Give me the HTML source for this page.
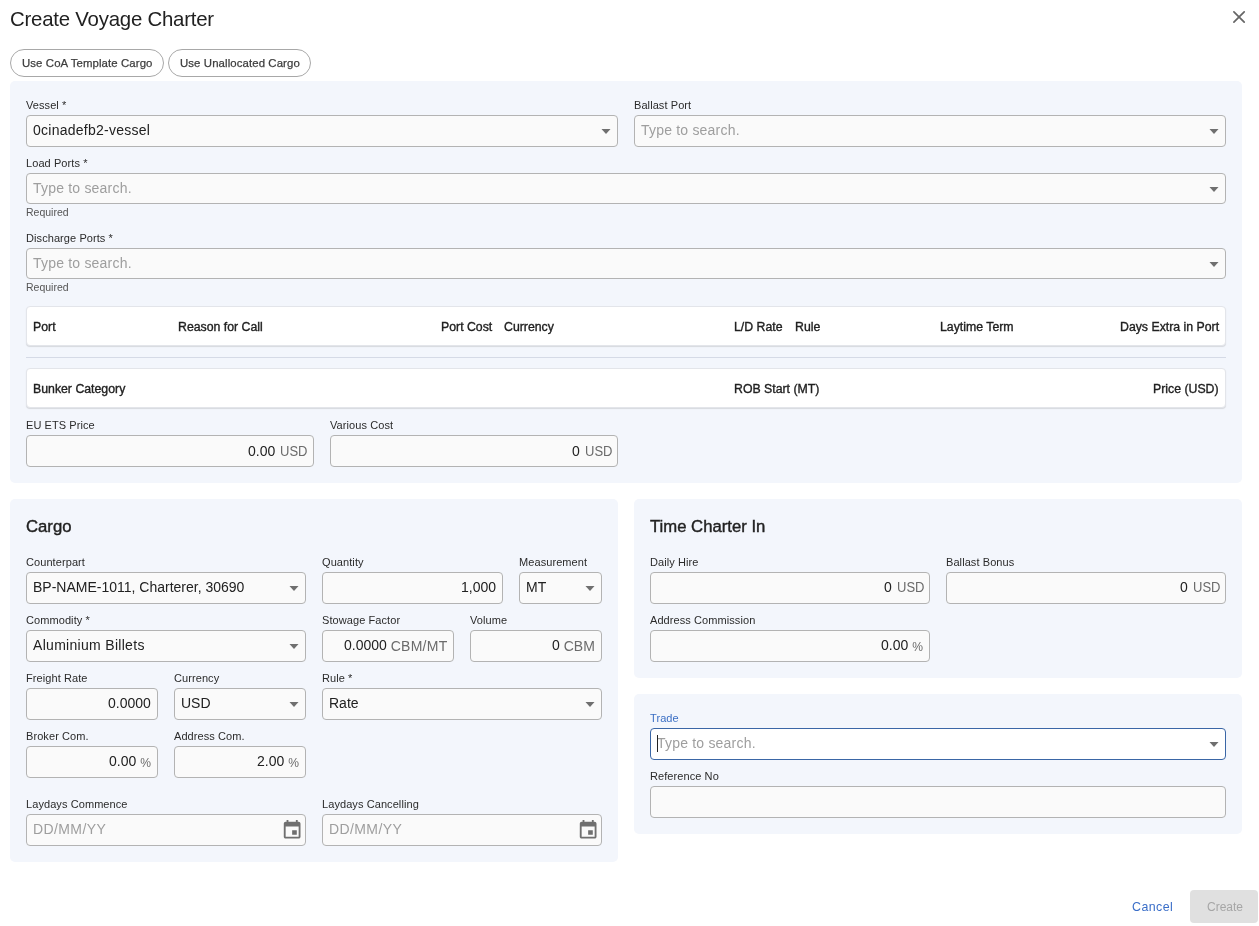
<!DOCTYPE html>
<html><head><meta charset="utf-8"><style>
html,body{margin:0;padding:0;background:#fff;width:1259px;height:926px;overflow:hidden;position:relative;font-family:"Liberation Sans",sans-serif;}
.t{position:absolute;white-space:nowrap;will-change:transform;}
.b{position:absolute;box-sizing:border-box;}
</style></head><body>
<div class="t" style="left:10px;top:8.63px;font-size:20.4px;line-height:20.4px;color:#212121;font-weight:400;letter-spacing:-0.22px;">Create Voyage Charter</div>
<svg class="b" style="left:1226px;top:4px" width="26" height="26" viewBox="1226 4 26 26"><path d="M1233.9 11.9L1244.2 22.2M1244.2 11.9L1233.9 22.2" stroke="#666" stroke-width="1.7" stroke-linecap="round" fill="none"/></svg>
<div class="b" style="left:10px;top:49px;width:154px;height:28px;border:1px solid #a8a8a8;border-radius:14px;"></div>
<div class="b" style="left:168px;top:49px;width:143px;height:28px;border:1px solid #a8a8a8;border-radius:14px;"></div>
<div class="t" style="left:22.3px;top:57.55px;font-size:11.4px;line-height:11.4px;color:#3d3d3d;font-weight:400;-webkit-text-stroke:0.25px #3d3d3d;letter-spacing:0.1px;">Use CoA Template Cargo</div>
<div class="t" style="left:180.3px;top:57.55px;font-size:11.4px;line-height:11.4px;color:#3d3d3d;font-weight:400;-webkit-text-stroke:0.25px #3d3d3d;letter-spacing:0.1px;">Use Unallocated Cargo</div>
<div class="b" style="left:10px;top:81px;width:1232px;height:402px;background:#f3f6fc;border-radius:5px;"></div>
<div class="t" style="left:26px;top:99.69px;font-size:11px;line-height:11px;color:#2b2b2b;font-weight:400;letter-spacing:0.08px;">Vessel *</div>
<div class="b" style="left:26px;top:115px;width:592px;height:32px;background:#fafafa;border:1px solid #b3b3b3;border-radius:4px;"></div>
<div class="t" style="left:33px;top:122.65px;font-size:14px;line-height:14px;color:#212121;font-weight:400;letter-spacing:0.25px;">0cinadefb2-vessel</div>
<svg class="b" style="left:601px;top:129px" width="10" height="5" viewBox="0 0 10 5"><path d="M0.5 0L5 4.9L9.5 0Z" fill="#6f6f6f"/></svg>
<div class="t" style="left:634px;top:99.69px;font-size:11px;line-height:11px;color:#2b2b2b;font-weight:400;letter-spacing:0.08px;">Ballast Port</div>
<div class="b" style="left:634px;top:115px;width:592px;height:32px;background:#fafafa;border:1px solid #b3b3b3;border-radius:4px;"></div>
<div class="t" style="left:641px;top:122.65px;font-size:14px;line-height:14px;color:#9e9e9e;font-weight:400;letter-spacing:0.2px;">Type to search.</div>
<svg class="b" style="left:1209px;top:129px" width="10" height="5" viewBox="0 0 10 5"><path d="M0.5 0L5 4.9L9.5 0Z" fill="#6f6f6f"/></svg>
<div class="t" style="left:26px;top:157.69px;font-size:11px;line-height:11px;color:#2b2b2b;font-weight:400;letter-spacing:0.08px;">Load Ports *</div>
<div class="b" style="left:26px;top:173px;width:1200px;height:31px;background:#fafafa;border:1px solid #b3b3b3;border-radius:4px;"></div>
<div class="t" style="left:33px;top:180.65px;font-size:14px;line-height:14px;color:#9e9e9e;font-weight:400;letter-spacing:0.2px;">Type to search.</div>
<svg class="b" style="left:1209px;top:187px" width="10" height="5" viewBox="0 0 10 5"><path d="M0.5 0L5 4.9L9.5 0Z" fill="#6f6f6f"/></svg>
<div class="t" style="left:26px;top:206.81px;font-size:10.5px;line-height:10.5px;color:#555;font-weight:400;">Required</div>
<div class="t" style="left:26px;top:232.69px;font-size:11px;line-height:11px;color:#2b2b2b;font-weight:400;letter-spacing:0.08px;">Discharge Ports *</div>
<div class="b" style="left:26px;top:248px;width:1200px;height:31px;background:#fafafa;border:1px solid #b3b3b3;border-radius:4px;"></div>
<div class="t" style="left:33px;top:255.65px;font-size:14px;line-height:14px;color:#9e9e9e;font-weight:400;letter-spacing:0.2px;">Type to search.</div>
<svg class="b" style="left:1209px;top:262px" width="10" height="5" viewBox="0 0 10 5"><path d="M0.5 0L5 4.9L9.5 0Z" fill="#6f6f6f"/></svg>
<div class="t" style="left:26px;top:282.11px;font-size:10.5px;line-height:10.5px;color:#555;font-weight:400;">Required</div>
<div class="b" style="left:26px;top:306px;width:1200px;height:40px;background:#fff;border:1px solid #e3e5ea;border-radius:4px;box-shadow:0 1px 1px rgba(0,0,0,0.12);box-sizing:border-box;"></div>
<div class="b" style="left:26px;top:368px;width:1200px;height:40px;background:#fff;border:1px solid #e3e5ea;border-radius:4px;box-shadow:0 1px 1px rgba(0,0,0,0.12);box-sizing:border-box;"></div>
<div class="b" style="left:26px;top:357px;width:1200px;height:1px;background:#d5dae6;"></div>
<div class="t" style="left:33px;top:320.59px;font-size:12.3px;line-height:12.3px;color:#212121;font-weight:400;-webkit-text-stroke:0.35px #212121;">Port</div>
<div class="t" style="left:178.4px;top:320.59px;font-size:12.3px;line-height:12.3px;color:#212121;font-weight:400;-webkit-text-stroke:0.35px #212121;">Reason for Call</div>
<div class="t" style="left:504.3px;top:320.59px;font-size:12.3px;line-height:12.3px;color:#212121;font-weight:400;-webkit-text-stroke:0.35px #212121;">Currency</div>
<div class="t" style="left:795.4px;top:320.59px;font-size:12.3px;line-height:12.3px;color:#212121;font-weight:400;-webkit-text-stroke:0.35px #212121;">Rule</div>
<div class="t" style="left:940.4px;top:320.59px;font-size:12.3px;line-height:12.3px;color:#212121;font-weight:400;-webkit-text-stroke:0.35px #212121;">Laytime Term</div>
<div class="t" style="right:766.4px;top:320.59px;font-size:12.3px;line-height:12.3px;color:#212121;font-weight:400;-webkit-text-stroke:0.35px #212121;">Port Cost</div>
<div class="t" style="right:476px;top:320.59px;font-size:12.3px;line-height:12.3px;color:#212121;font-weight:400;-webkit-text-stroke:0.35px #212121;">L/D Rate</div>
<div class="t" style="right:40px;top:320.59px;font-size:12.3px;line-height:12.3px;color:#212121;font-weight:400;-webkit-text-stroke:0.35px #212121;">Days Extra in Port</div>
<div class="t" style="left:33px;top:382.59px;font-size:12.3px;line-height:12.3px;color:#212121;font-weight:400;-webkit-text-stroke:0.35px #212121;">Bunker Category</div>
<div class="t" style="left:734.4px;top:382.59px;font-size:12.3px;line-height:12.3px;color:#212121;font-weight:400;-webkit-text-stroke:0.35px #212121;">ROB Start (MT)</div>
<div class="t" style="right:40px;top:382.59px;font-size:12.3px;line-height:12.3px;color:#212121;font-weight:400;-webkit-text-stroke:0.35px #212121;">Price (USD)</div>
<div class="t" style="left:26px;top:419.69px;font-size:11px;line-height:11px;color:#2b2b2b;font-weight:400;letter-spacing:0.08px;">EU ETS Price</div>
<div class="b" style="left:26px;top:435px;width:288px;height:32px;background:#fafafa;border:1px solid #b3b3b3;border-radius:4px;"></div>
<div class="t" style="right:952px;top:443.65px;font-size:14px;line-height:14px;color:#212121;font-weight:400;">0.00 <span style="display:inline-block;margin-left:0px;position:relative;left:1px;width:27.53px;color:#6b6b6b;font-size:14px"><span style="display:inline-block;transform:scaleX(0.93);transform-origin:0 0">USD</span></span></div>
<div class="t" style="left:330px;top:419.69px;font-size:11px;line-height:11px;color:#2b2b2b;font-weight:400;letter-spacing:0.08px;">Various Cost</div>
<div class="b" style="left:330px;top:435px;width:288px;height:32px;background:#fafafa;border:1px solid #b3b3b3;border-radius:4px;"></div>
<div class="t" style="right:648px;top:443.65px;font-size:14px;line-height:14px;color:#212121;font-weight:400;">0 <span style="display:inline-block;margin-left:0px;position:relative;left:1px;width:27.53px;color:#6b6b6b;font-size:14px"><span style="display:inline-block;transform:scaleX(0.93);transform-origin:0 0">USD</span></span></div>
<div class="b" style="left:10px;top:499px;width:608px;height:363px;background:#f3f6fc;border-radius:5px;"></div>
<div class="t" style="left:26px;top:518.56px;font-size:16.7px;line-height:16.7px;color:#212121;font-weight:400;-webkit-text-stroke:0.4px #212121;">Cargo</div>
<div class="t" style="left:26px;top:556.69px;font-size:11px;line-height:11px;color:#2b2b2b;font-weight:400;letter-spacing:0.08px;">Counterpart</div>
<div class="b" style="left:26px;top:572px;width:280px;height:32px;background:#fafafa;border:1px solid #b3b3b3;border-radius:4px;"></div>
<div class="t" style="left:33px;top:579.65px;font-size:14px;line-height:14px;color:#212121;font-weight:400;">BP-NAME-1011, Charterer, 30690</div>
<svg class="b" style="left:289px;top:586px" width="10" height="5" viewBox="0 0 10 5"><path d="M0.5 0L5 4.9L9.5 0Z" fill="#6f6f6f"/></svg>
<div class="t" style="left:322px;top:556.69px;font-size:11px;line-height:11px;color:#2b2b2b;font-weight:400;letter-spacing:0.08px;">Quantity</div>
<div class="b" style="left:322px;top:572px;width:181px;height:32px;background:#fafafa;border:1px solid #b3b3b3;border-radius:4px;"></div>
<div class="t" style="right:763px;top:579.65px;font-size:14px;line-height:14px;color:#212121;font-weight:400;">1,000</div>
<div class="t" style="left:519px;top:556.69px;font-size:11px;line-height:11px;color:#2b2b2b;font-weight:400;letter-spacing:0.08px;">Measurement</div>
<div class="b" style="left:519px;top:572px;width:83px;height:32px;background:#fafafa;border:1px solid #b3b3b3;border-radius:4px;"></div>
<div class="t" style="left:526px;top:579.65px;font-size:14px;line-height:14px;color:#212121;font-weight:400;">MT</div>
<svg class="b" style="left:585px;top:586px" width="10" height="5" viewBox="0 0 10 5"><path d="M0.5 0L5 4.9L9.5 0Z" fill="#6f6f6f"/></svg>
<div class="t" style="left:26px;top:614.69px;font-size:11px;line-height:11px;color:#2b2b2b;font-weight:400;letter-spacing:0.08px;">Commodity *</div>
<div class="b" style="left:26px;top:630px;width:280px;height:32px;background:#fafafa;border:1px solid #b3b3b3;border-radius:4px;"></div>
<div class="t" style="left:33px;top:637.65px;font-size:14px;line-height:14px;color:#212121;font-weight:400;letter-spacing:0.3px;">Aluminium Billets</div>
<svg class="b" style="left:289px;top:644px" width="10" height="5" viewBox="0 0 10 5"><path d="M0.5 0L5 4.9L9.5 0Z" fill="#6f6f6f"/></svg>
<div class="t" style="left:322px;top:614.69px;font-size:11px;line-height:11px;color:#2b2b2b;font-weight:400;letter-spacing:0.08px;">Stowage Factor</div>
<div class="b" style="left:322px;top:630px;width:132px;height:32px;background:#fafafa;border:1px solid #b3b3b3;border-radius:4px;"></div>
<div class="t" style="right:812px;top:637.65px;font-size:14px;line-height:14px;color:#212121;font-weight:400;">0.0000 <span style="color:#6b6b6b;font-size:14px;position:relative;top:0.5px;letter-spacing:0.25px;">CBM/MT</span></div>
<div class="t" style="left:470px;top:614.69px;font-size:11px;line-height:11px;color:#2b2b2b;font-weight:400;letter-spacing:0.08px;">Volume</div>
<div class="b" style="left:470px;top:630px;width:132px;height:32px;background:#fafafa;border:1px solid #b3b3b3;border-radius:4px;"></div>
<div class="t" style="right:664px;top:637.65px;font-size:14px;line-height:14px;color:#212121;font-weight:400;">0 <span style="color:#6b6b6b;font-size:14px;position:relative;top:0.5px;">CBM</span></div>
<div class="t" style="left:26px;top:672.69px;font-size:11px;line-height:11px;color:#2b2b2b;font-weight:400;letter-spacing:0.08px;">Freight Rate</div>
<div class="b" style="left:26px;top:688px;width:132px;height:32px;background:#fafafa;border:1px solid #b3b3b3;border-radius:4px;"></div>
<div class="t" style="right:1108px;top:695.65px;font-size:14px;line-height:14px;color:#212121;font-weight:400;">0.0000</div>
<div class="t" style="left:174px;top:672.69px;font-size:11px;line-height:11px;color:#2b2b2b;font-weight:400;letter-spacing:0.08px;">Currency</div>
<div class="b" style="left:174px;top:688px;width:132px;height:32px;background:#fafafa;border:1px solid #b3b3b3;border-radius:4px;"></div>
<div class="t" style="left:181px;top:695.65px;font-size:14px;line-height:14px;color:#212121;font-weight:400;">USD</div>
<svg class="b" style="left:289px;top:702px" width="10" height="5" viewBox="0 0 10 5"><path d="M0.5 0L5 4.9L9.5 0Z" fill="#6f6f6f"/></svg>
<div class="t" style="left:322px;top:672.69px;font-size:11px;line-height:11px;color:#2b2b2b;font-weight:400;letter-spacing:0.08px;">Rule *</div>
<div class="b" style="left:322px;top:688px;width:280px;height:32px;background:#fafafa;border:1px solid #b3b3b3;border-radius:4px;"></div>
<div class="t" style="left:329px;top:695.65px;font-size:14px;line-height:14px;color:#212121;font-weight:400;">Rate</div>
<svg class="b" style="left:585px;top:702px" width="10" height="5" viewBox="0 0 10 5"><path d="M0.5 0L5 4.9L9.5 0Z" fill="#6f6f6f"/></svg>
<div class="t" style="left:26px;top:730.69px;font-size:11px;line-height:11px;color:#2b2b2b;font-weight:400;letter-spacing:0.08px;">Broker Com.</div>
<div class="b" style="left:26px;top:746px;width:132px;height:32px;background:#fafafa;border:1px solid #b3b3b3;border-radius:4px;"></div>
<div class="t" style="right:1108px;top:753.65px;font-size:14px;line-height:14px;color:#212121;font-weight:400;">0.00 <span style="color:#6b6b6b;font-size:12.1px;position:relative;top:0.8px;">%</span></div>
<div class="t" style="left:174px;top:730.69px;font-size:11px;line-height:11px;color:#2b2b2b;font-weight:400;letter-spacing:0.08px;">Address Com.</div>
<div class="b" style="left:174px;top:746px;width:132px;height:32px;background:#fafafa;border:1px solid #b3b3b3;border-radius:4px;"></div>
<div class="t" style="right:960px;top:753.65px;font-size:14px;line-height:14px;color:#212121;font-weight:400;">2.00 <span style="color:#6b6b6b;font-size:12.1px;position:relative;top:0.8px;">%</span></div>
<div class="t" style="left:26px;top:798.69px;font-size:11px;line-height:11px;color:#2b2b2b;font-weight:400;letter-spacing:0.08px;">Laydays Commence</div>
<div class="b" style="left:26px;top:814px;width:280px;height:32px;background:#fafafa;border:1px solid #b3b3b3;border-radius:4px;"></div>
<div class="t" style="left:33px;top:821.65px;font-size:14px;line-height:14px;color:#9e9e9e;font-weight:400;letter-spacing:0.4px;">DD/MM/YY</div>
<svg class="b" style="left:281.2px;top:819.3px" width="22.3" height="22.3" viewBox="0 0 24 24"><path fill="#6f6f6f" d="M17 12h-5v5h5v-5zM16 1v2H8V1H6v2H5c-1.11 0-1.99.9-1.99 2L3 19c0 1.1.89 2 2 2h14c1.1 0 2-.9 2-2V5c0-1.1-.9-2-2-2h-1V1h-2zm3 18H5V8h14v11z"/></svg>
<div class="t" style="left:322px;top:798.69px;font-size:11px;line-height:11px;color:#2b2b2b;font-weight:400;letter-spacing:0.08px;">Laydays Cancelling</div>
<div class="b" style="left:322px;top:814px;width:280px;height:32px;background:#fafafa;border:1px solid #b3b3b3;border-radius:4px;"></div>
<div class="t" style="left:329px;top:821.65px;font-size:14px;line-height:14px;color:#9e9e9e;font-weight:400;letter-spacing:0.4px;">DD/MM/YY</div>
<svg class="b" style="left:577.2px;top:819.3px" width="22.3" height="22.3" viewBox="0 0 24 24"><path fill="#6f6f6f" d="M17 12h-5v5h5v-5zM16 1v2H8V1H6v2H5c-1.11 0-1.99.9-1.99 2L3 19c0 1.1.89 2 2 2h14c1.1 0 2-.9 2-2V5c0-1.1-.9-2-2-2h-1V1h-2zm3 18H5V8h14v11z"/></svg>
<div class="b" style="left:634px;top:499px;width:608px;height:179px;background:#f3f6fc;border-radius:5px;"></div>
<div class="t" style="left:650px;top:518.56px;font-size:16.7px;line-height:16.7px;color:#212121;font-weight:400;-webkit-text-stroke:0.4px #212121;">Time Charter In</div>
<div class="t" style="left:650px;top:556.69px;font-size:11px;line-height:11px;color:#2b2b2b;font-weight:400;letter-spacing:0.08px;">Daily Hire</div>
<div class="b" style="left:650px;top:572px;width:280px;height:32px;background:#fafafa;border:1px solid #b3b3b3;border-radius:4px;"></div>
<div class="t" style="right:336px;top:579.65px;font-size:14px;line-height:14px;color:#212121;font-weight:400;">0 <span style="display:inline-block;margin-left:0px;position:relative;left:1px;width:27.53px;color:#6b6b6b;font-size:14px"><span style="display:inline-block;transform:scaleX(0.93);transform-origin:0 0">USD</span></span></div>
<div class="t" style="left:946px;top:556.69px;font-size:11px;line-height:11px;color:#2b2b2b;font-weight:400;letter-spacing:0.08px;">Ballast Bonus</div>
<div class="b" style="left:946px;top:572px;width:280px;height:32px;background:#fafafa;border:1px solid #b3b3b3;border-radius:4px;"></div>
<div class="t" style="right:40px;top:579.65px;font-size:14px;line-height:14px;color:#212121;font-weight:400;">0 <span style="display:inline-block;margin-left:0px;position:relative;left:1px;width:27.53px;color:#6b6b6b;font-size:14px"><span style="display:inline-block;transform:scaleX(0.93);transform-origin:0 0">USD</span></span></div>
<div class="t" style="left:650px;top:614.69px;font-size:11px;line-height:11px;color:#2b2b2b;font-weight:400;letter-spacing:0.08px;">Address Commission</div>
<div class="b" style="left:650px;top:630px;width:280px;height:32px;background:#fafafa;border:1px solid #b3b3b3;border-radius:4px;"></div>
<div class="t" style="right:336px;top:637.65px;font-size:14px;line-height:14px;color:#212121;font-weight:400;">0.00 <span style="color:#6b6b6b;font-size:12.1px;position:relative;top:0.8px;">%</span></div>
<div class="b" style="left:634px;top:694px;width:608px;height:140px;background:#f3f6fc;border-radius:5px;"></div>
<div class="t" style="left:650px;top:712.69px;font-size:11px;line-height:11px;color:#3b6fc4;font-weight:400;letter-spacing:0.08px;">Trade</div>
<div class="b" style="left:650px;top:728px;width:576px;height:32px;background:#ffffff;border:1px solid #3a66a6;border-radius:4px;"></div>
<div class="t" style="left:657px;top:735.65px;font-size:14px;line-height:14px;color:#9e9e9e;font-weight:400;letter-spacing:0.2px;">Type to search.</div>
<div class="b" style="left:657px;top:735px;width:1px;height:17px;background:#222;"></div>
<svg class="b" style="left:1209px;top:742px" width="10" height="5" viewBox="0 0 10 5"><path d="M0.5 0L5 4.9L9.5 0Z" fill="#6f6f6f"/></svg>
<div class="t" style="left:650px;top:770.69px;font-size:11px;line-height:11px;color:#2b2b2b;font-weight:400;letter-spacing:0.08px;">Reference No</div>
<div class="b" style="left:650px;top:786px;width:576px;height:32px;background:#fafafa;border:1px solid #b3b3b3;border-radius:4px;"></div>
<div class="t" style="left:1132px;top:900.90px;font-size:12.4px;line-height:12.4px;color:#3a6ec8;font-weight:400;letter-spacing:0.45px;">Cancel</div>
<div class="b" style="left:1190px;top:890px;width:68px;height:33px;background:#e0e0e0;border-radius:4px;"></div>
<div class="t" style="left:1206.5px;top:900.54px;font-size:12px;line-height:12px;color:#a6a6a6;font-weight:400;">Create</div>
</body></html>
